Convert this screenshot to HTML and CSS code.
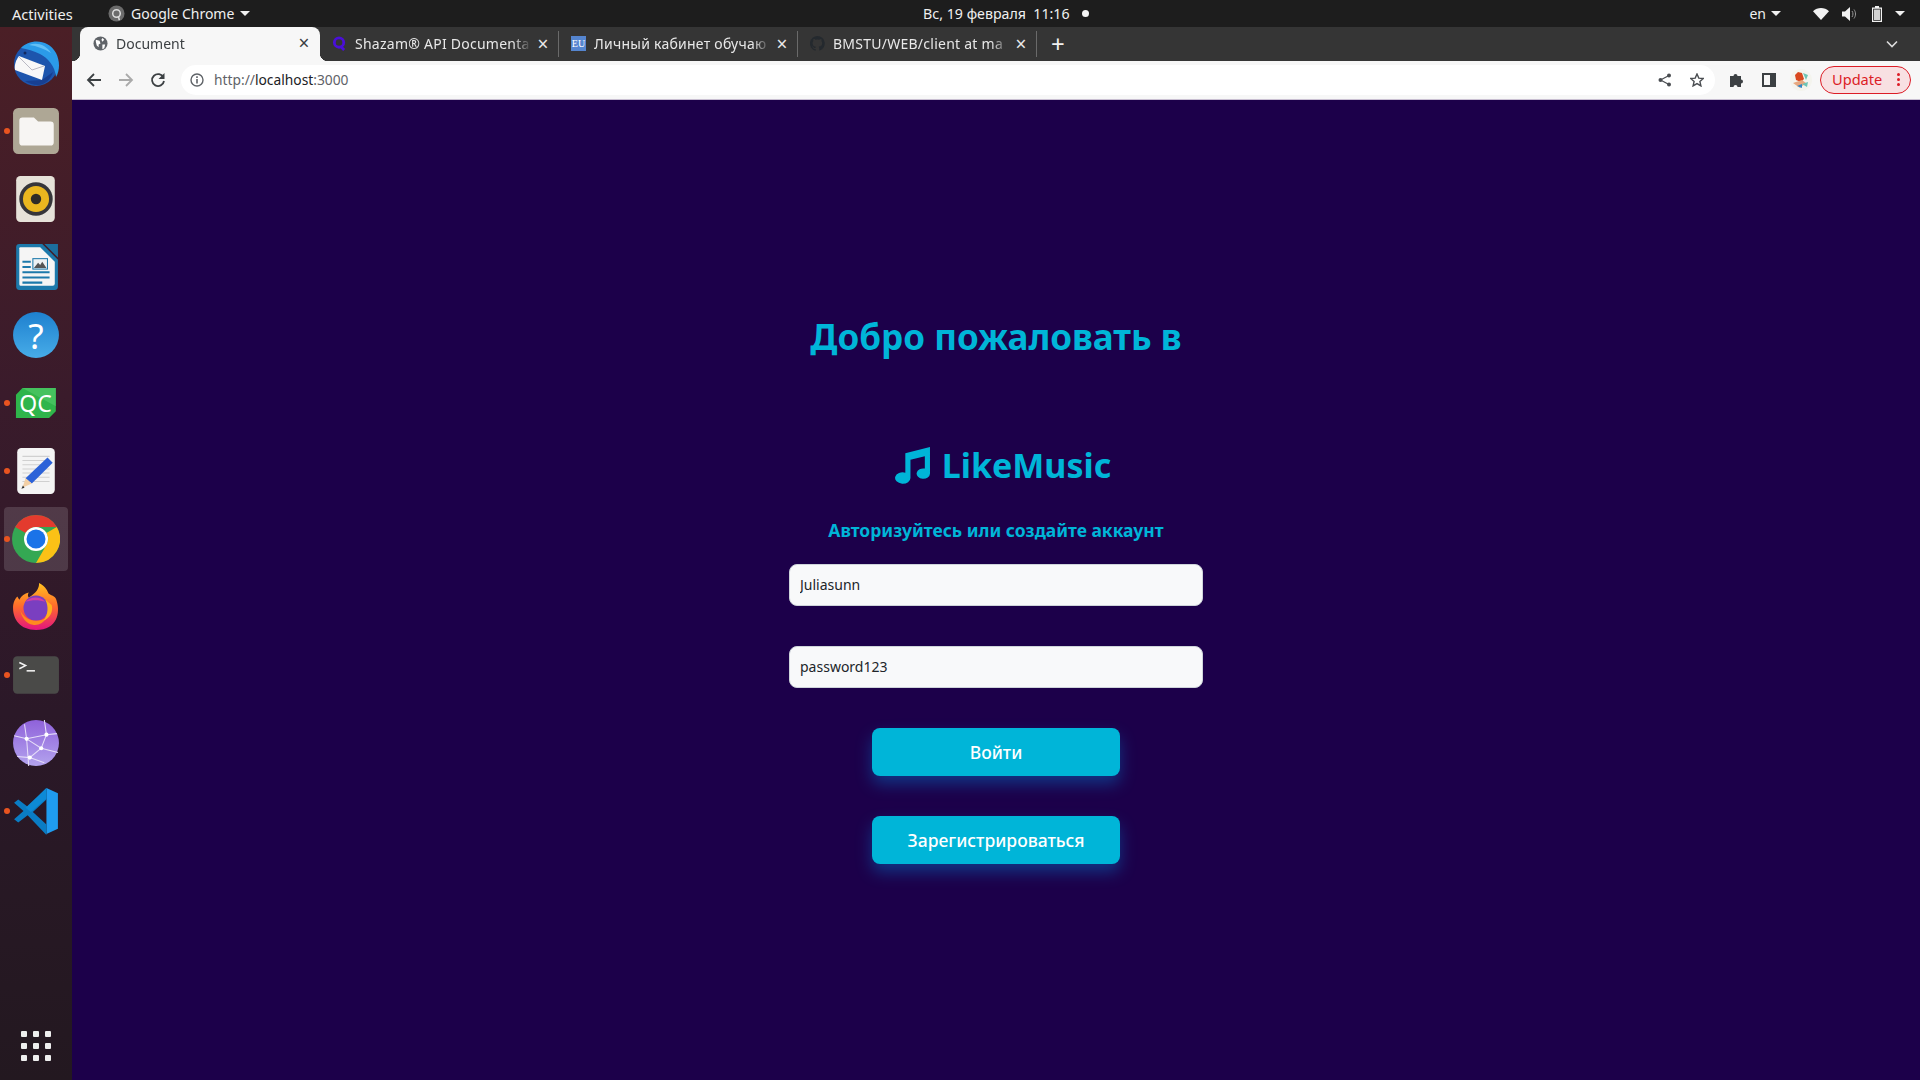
FILE: index.html
```html
<!DOCTYPE html>
<html lang="ru">
<head>
    <meta charset="UTF-8">
    <meta name="viewport" content="width=device-width, initial-scale=1.0">
    <title>Document</title>
    <link rel="stylesheet" href="styles.css">
</head>
<body>
    <!-- верхняя панель ubuntu -->
    <header class="topbar">
        <span class="activities">Activities</span>
        <span class="app-menu">
            <svg class="app-icon" viewBox="0 0 18 18"><circle cx="9" cy="9" r="8.5" fill="#6b6b6b"/><circle cx="9" cy="9" r="4" fill="none" stroke="#ddd" stroke-width="1.6"/><path d="M11 12l1 4" stroke="#ddd" stroke-width="1.6"/></svg>
            Google Chrome
            <i class="caret"></i>
        </span>
        <span class="clock">Вс, 19 февраля&nbsp; 11:16<i class="clock-dot"></i></span>
        <div class="tray">
            <span class="lang">en</span>
            <i class="caret lang-caret"></i>
            <svg class="tray-wifi" viewBox="0 0 16 12"><path d="M0 3.2C4.500-1 11.500-1 16 3.200L8 12z" fill="#f2f2f2"/></svg>
            <svg class="tray-sound" viewBox="0 0 15 14"><path d="M0 4.500h3L8 0v14l-5-4.500H0z" fill="#f2f2f2"/><path d="M10 4c1.300 1.800 1.300 4.200 0 6M12 2.500c2 2.700 2 6.300 0 9" fill="none" stroke="#999" stroke-width="1"/></svg>
            <svg class="tray-battery" viewBox="0 0 10 16"><path d="M3 0h4v1.500h3V16H0V1.500h3zM1.200 2.700v12.100h7.600V2.700z" fill="#f2f2f2" fill-rule="evenodd"/><rect x="2" y="3.500" width="6" height="10.500" fill="#f2f2f2" opacity=".85"/></svg>
            <i class="caret"></i>
        </div>
    </header>

    <div class="desktop">
        <nav class="dock">
            <div class="dock-item">
                <svg class="dock-icon" viewBox="0 0 48 48">
                    <circle cx="24" cy="25" r="22" fill="#1d55ad"/>
                    <path d="M9 9C17 0 36-1 44 14c4 8 4 17 0 24C43 27 36 19 28 15c-6-3-13-5-19-6z" fill="#2b9be8"/>
                    <path d="M17 6c8-3 17 0 22 8-6-4-14-7-22-8z" fill="#64c0f5"/>
                    <path d="M7 17l26 10-3 14L3 31c-1-5 1-10 4-14z" fill="#f8f8f8"/>
                    <path d="M7 18l13 13 12-4" fill="none" stroke="#b9b9c4" stroke-width="1"/>
                    <path d="M13 42l17-1 11-8c-2 7-8 13-15 13-5 0-10-2-13-4z" fill="#173f91"/>
                    <circle cx="13" cy="14" r="1.500" fill="#12285f"/>
                </svg>
            </div>
            <div class="dock-item running">
                <svg class="dock-icon" viewBox="0 0 46 46">
                    <rect x="1" y="1" width="44" height="44" rx="5" fill="#aea795"/>
                    <path d="M7 13q0-3 3-3h11l4 4h12q3 0 3 3v17q0 3-3 3H10q-3 0-3-3z" fill="#f7f5f3"/>
                </svg>
            </div>
            <div class="dock-item">
                <svg class="dock-icon" viewBox="0 0 46 46">
                    <rect x="4" y="1" width="37" height="44" rx="4" fill="#e6e2d9"/>
                    <circle cx="23" cy="23" r="16" fill="#36363a"/>
                    <circle cx="23" cy="23" r="12.500" fill="#eab71f"/>
                    <circle cx="23" cy="23" r="5" fill="#2e2c28"/>
                </svg>
            </div>
            <div class="dock-item">
                <svg class="dock-icon" viewBox="0 0 46 46">
                    <path d="M7 1h22l15 15v26q0 3-3 3H7q-3 0-3-3V4q0-3 3-3z" fill="#1c79ab"/>
                    <path d="M8 4h19l14 14v21q0 2-2 2H8q-1 0-1-2V5q0-1 1-1z" fill="#f5f5f5"/>
                    <path d="M31 1l13 0v13z" fill="#1c6f9e"/>
                    <path d="M10 17h8v2h-8zM10 22h8v2h-8zM10 27h26v2H10zM10 32h26v2H10zM10 37h19v2H10z" fill="#1c79ab"/>
                    <rect x="20" y="15" width="14" height="10" fill="#eef2f4" stroke="#1c79ab"/>
                    <path d="M21 24l4-5 2 2 2-3 4 6z" fill="#555"/>
                </svg>
            </div>
            <div class="dock-item">
                <svg class="dock-icon" viewBox="0 0 46 46">
                    <defs><linearGradient id="helpFill" x1="0" y1="0" x2="0" y2="1"><stop offset="0" stop-color="#1e80cf"/><stop offset="1" stop-color="#47ace8"/></linearGradient></defs>
                    <circle cx="23" cy="23" r="22" fill="url(#helpFill)"/>
                    <text x="23" y="36" class="help-mark">?</text>
                </svg>
            </div>
            <div class="dock-item running">
                <svg class="dock-icon" viewBox="0 0 46 46">
                    <path d="M10 8.600H42V31l-6.500 6.400H3.800V15z" fill="#2fb54b"/>
                    <path d="M10 8.600H42V26z" fill="#4fc867" opacity=".7"/>
                    <text x="22.500" y="31.500" class="qc-mark">QC</text>
                </svg>
            </div>
            <div class="dock-item running">
                <svg class="dock-icon" viewBox="0 0 46 46">
                    <rect x="5" y="1" width="36" height="44" rx="4" fill="#f4f4f4"/>
                    <path d="M10 9h26M10 13h26M10 17h26M10 21h26M10 25h26M10 29h26M10 33h26" stroke="#d0d0d0"/>
                    <path d="M34 10l5 5-20 20-6-5z" fill="#2c62d8"/>
                    <path d="M13 30l6 5-9 4z" fill="#f2cfa6"/>
                    <path d="M10.500 37l-1.500 3 3-1z" fill="#333"/>
                </svg>
            </div>
            <div class="dock-item running active">
                <svg class="dock-icon" viewBox="0 0 48 48">
                    <circle cx="24" cy="24" r="24" fill="#34a853"/>
                    <path d="M24 0a24 24 0 0 1 20.800 12H24a12 12 0 0 0-10.400 6L3.200 12A24 24 0 0 1 24 0z" fill="#e33b2e"/>
                    <path d="M44.800 12A24 24 0 0 1 24 48l10.400-18A12 12 0 0 0 34.400 18z" fill="#fbc116"/>
                    <circle cx="24" cy="24" r="12" fill="#fff"/>
                    <circle cx="24" cy="24" r="9.500" fill="#1a73e8"/>
                </svg>
            </div>
            <div class="dock-item">
                <svg class="dock-icon" viewBox="0 0 46 46">
                    <defs><linearGradient id="foxFill" x1="0" y1="0" x2="0" y2="1"><stop offset="0" stop-color="#ffc21f"/><stop offset=".5" stop-color="#ff6a2c"/><stop offset="1" stop-color="#e3147f"/></linearGradient></defs>
                    <path d="M26 0c7 4 8 8 9 10 4 3 7 2 8 8 3 10 1 27-20 27C8 45 1 35 1 24c0-5 2-9 4-11 1 1 1 2 2 3 2-4 5-6 9-7-1 2-1 3 0 5 4-3 10-6 10-14z" fill="url(#foxFill)"/>
                    <circle cx="23" cy="24" r="12" fill="#7a3fc0"/>
                    <path d="M13 18c4-5 14-6 19 0-6-2-13-2-19 0z" fill="#d13fa8"/>
                    <path d="M8 26c4 10 16 13 25 7-2 5-8 8-13 7-6-1-11-7-12-14z" fill="#ff8a1f"/>
                    <path d="M32 16c3 6 3 14-2 20 6-2 10-9 8-15z" fill="#ffb01f"/>
                </svg>
            </div>
            <div class="dock-item running">
                <svg class="dock-icon" viewBox="0 0 46 46">
                    <rect x="1" y="5" width="44" height="36" rx="4" fill="#4a4a48"/>
                    <path d="M7 11l6 3-6 3" fill="none" stroke="#f2f2f2" stroke-width="1.500"/>
                    <path d="M14 19h8" stroke="#f2f2f2" stroke-width="1.500"/>
                </svg>
            </div>
            <div class="dock-item">
                <svg class="dock-icon" viewBox="0 0 46 46">
                    <defs><linearGradient id="globeFill" x1="0" y1="0" x2="0" y2="1"><stop offset="0" stop-color="#8f62da"/><stop offset="1" stop-color="#b3a3ee"/></linearGradient></defs>
                    <circle cx="23" cy="23" r="22" fill="url(#globeFill)"/>
                    <path d="M2 16l12 3 19-4 10-1M14 19l2 26M14 19l14 9 16 4M33 15l-5 13-11 9 -12-1M33 15L31 1M14 19L12 5M17 37l14 5" fill="none" stroke="#e6def8" stroke-width="1"/>
                    <circle cx="14" cy="19" r="2" fill="#fff"/><circle cx="33" cy="15" r="2" fill="#fff"/><circle cx="28" cy="28" r="2" fill="#fff"/><circle cx="17" cy="37" r="2" fill="#fff"/>
                </svg>
            </div>
            <div class="dock-item running">
                <svg class="dock-icon" viewBox="0 0 46 46">
                    <path d="M33 1l11 5v34l-11 5z" fill="#1f9cf0"/>
                    <path d="M33 1L15 19 6 12l-4 3 9 8-9 8 4 3 9-7 18 19 0-10-13-12 13-12z" fill="#0a7cc4"/>
                    <path d="M33 1l-20 19 5 4 15-13z" fill="#0d8ad6"/>
                </svg>
            </div>
            <div class="dock-spacer"></div>
            <div class="app-grid">
                <i></i><i></i><i></i><i></i><i></i><i></i><i></i><i></i><i></i>
            </div>
        </nav>

        <div class="browser">
            <div class="tabstrip">
                <div class="tab tab-active">
                    <svg class="favicon" viewBox="0 0 16 16"><circle cx="8" cy="8" r="7.500" fill="#5f6368"/><path d="M3 4l4 1 1 3-2 1 0 3-2-2-1-4zM10 2l2 2-2 2-1-2zM10 9l3 0-1 4-2 1z" fill="#fff"/></svg>
                    <span class="tab-title">Document</span>
                    <span class="tab-close">×</span>
                </div>
                <div class="tab">
                    <svg class="favicon" viewBox="0 0 16 16"><circle cx="7.500" cy="7" r="5" fill="none" stroke="#4a0fd8" stroke-width="3"/><path d="M9 11l4 4" stroke="#4a0fd8" stroke-width="3"/></svg>
                    <span class="tab-title">Shazam® API Documenta</span>
                    <span class="tab-close">×</span>
                </div>
                <div class="tab">
                    <span class="favicon favicon-eu">EU</span>
                    <span class="tab-title">Личный кабинет обучаю</span>
                    <span class="tab-close">×</span>
                </div>
                <div class="tab">
                    <svg class="favicon" viewBox="0 0 16 16"><path d="M8 0a8 8 0 0 0-2.500 15.600c.4.100.5-.2.500-.4v-1.400c-2.200.5-2.700-1-2.700-1-.4-.9-.9-1.200-.9-1.200-.7-.5.100-.5.100-.5.800.1 1.200.8 1.200.8.700 1.200 1.900.9 2.300.7.100-.5.300-.9.500-1.100-1.800-.2-3.700-.9-3.700-4 0-.9.300-1.600.8-2.100-.1-.2-.4-1 .1-2.100 0 0 .7-.2 2.200.8a7.600 7.600 0 0 1 4 0c1.500-1 2.200-.8 2.200-.8.400 1.100.2 1.900.1 2.100.5.600.8 1.300.8 2.100 0 3.100-1.900 3.700-3.700 3.900.3.300.6.700.6 1.500v2.200c0 .2.100.5.600.4A8 8 0 0 0 8 0z" fill="#24292e"/></svg>
                    <span class="tab-title">BMSTU/WEB/client at ma</span>
                    <span class="tab-close">×</span>
                </div>
                <span class="tab-new">+</span>
                <div class="dock-spacer"></div>
                <svg class="tab-list" viewBox="0 0 12 8"><path d="M1 1.500l5 5 5-5" fill="none" stroke="#dcdcdc" stroke-width="1.600"/></svg>
            </div>

            <div class="toolbar">
                <svg class="tool-icon" viewBox="0 0 16 16"><path d="M15 8H2M8 2L2 8l6 6" fill="none" stroke="#3c4043" stroke-width="1.800"/></svg>
                <svg class="tool-icon" viewBox="0 0 16 16"><path d="M1 8h13M8 2l6 6-6 6" fill="none" stroke="#aaaaaa" stroke-width="1.800"/></svg>
                <svg class="tool-icon" viewBox="0 0 16 16"><path d="M13.500 5.500A6 6 0 1 0 14 9" fill="none" stroke="#3c4043" stroke-width="1.800"/><path d="M14.500 1v6h-6z" fill="#3c4043"/></svg>
                <div class="omnibox">
                    <svg class="info-icon" viewBox="0 0 14 14"><circle cx="7" cy="7" r="6" fill="none" stroke="#5f6368" stroke-width="1.400"/><path d="M6.200 6h1.600v4.500H6.200zM6.200 3.300h1.600v1.600H6.200z" fill="#5f6368"/></svg>
                    <span class="url">http://<b>localhost</b>:3000</span>
                    <div class="dock-spacer"></div>
                    <svg class="omni-icon" viewBox="0 0 14 14"><circle cx="2.500" cy="7" r="2" fill="#4a4d51"/><circle cx="11" cy="2.500" r="2" fill="#4a4d51"/><circle cx="11" cy="11.500" r="2" fill="#4a4d51"/><path d="M2.500 7L11 2.500M2.500 7L11 11.500" stroke="#4a4d51" stroke-width="1.300"/></svg>
                    <svg class="omni-icon" viewBox="0 0 14 14"><path d="M7 1l1.800 4.100 4.500.4-3.400 3 1 4.400L7 10.600l-3.900 2.300 1-4.400-3.400-3 4.500-.4z" fill="none" stroke="#4a4d51" stroke-width="1.400"/></svg>
                </div>
                <svg class="ext-icon" viewBox="0 0 16 16"><path d="M1 5h3.500a2 2 0 1 1 4 0H12v3.500a2 2 0 1 1 0 4V16H8.500a2 2 0 1 0-4 0H1z" fill="#3c4043" transform="translate(0 -1)"/></svg>
                <svg class="ext-icon panel-icon" viewBox="0 0 14 14"><path d="M0 0h14v14H0zM2 2v10h6V2z" fill="#3c4043" fill-rule="evenodd"/></svg>
                <svg class="avatar" viewBox="0 0 22 22">
                    <circle cx="11" cy="11" r="11" fill="#f4f4ee"/>
                    <path d="M8 3l4 1 2 6-3 3-5-2-1-5z" fill="#d9481f"/>
                    <path d="M3 14l9-3 4 3-6 5z" fill="#e8a87f"/>
                    <path d="M13 4l5 2-2 5zM12 15l6-2-1 5z" fill="#6fc4b4"/>
                    <path d="M7 17l5-2 0 4z" fill="#2f86c8"/>
                </svg>
                <div class="update-pill">
                    <span>Update</span>
                    <span class="update-dots"><i></i><i></i><i></i></span>
                </div>
            </div>

            <main class="page">
                <h1 class="welcome">Добро пожаловать в</h1>
                <div class="logo">
                    <svg class="logo-note" viewBox="0 0 37 37"><path d="M12 7L36 1v26a6.500 5 0 1 1-5-5V10L17 13.500V31a7.500 5.500 0 1 1-5-5z" fill="#00b5d8"/></svg>
                    <span>LikeMusic</span>
                </div>
                <h2 class="subtitle">Авторизуйтесь или создайте аккаунт</h2>
                <input class="field" type="text" value="Juliasunn">
                <input class="field" type="text" value="password123">
                <button class="action-btn">Войти</button>
                <button class="action-btn">Зарегистрироваться</button>
            </main>
        </div>
    </div>
</body>
</html>
```

FILE: styles.css
```css
* {
    box-sizing: border-box;
}
html, body {
    height: 100%;
}
body {
    margin: 0;
    overflow: hidden;
    display: flex;
    flex-direction: column;
    font-family: "Noto Sans", Roboto, sans-serif;
    background: #1c004a;
}

/* topbar */
.topbar {
    height: 27px;
    flex: none;
    display: flex;
    align-items: center;
    position: relative;
    background: #1d1d1d;
    color: #f0f0f0;
    font-size: 14px;
}
.activities {
    margin-left: 12px;
    width: 96px;
    font-size: 14.6px;
}
.app-menu {
    display: flex;
    align-items: center;
    gap: 6px;
}
.app-icon {
    width: 17px;
    height: 17px;
}
.caret {
    width: 0;
    height: 0;
    border-left: 5px solid transparent;
    border-right: 5px solid transparent;
    border-top: 5px solid #f0f0f0;
}
.clock {
    position: absolute;
    left: 923px;
    display: flex;
    align-items: center;
    white-space: pre;
    font-size: 14.2px;
}
.clock-dot {
    width: 7px;
    height: 7px;
    margin-left: 12px;
    border-radius: 50%;
    background: #f5f5f5;
}
.tray {
    margin-left: auto;
    display: flex;
    align-items: center;
    padding-right: 15px;
}
.lang {
    margin-right: 5px;
}
.lang-caret {
    margin-right: 32px;
}
.tray-wifi {
    width: 16px;
    height: 12px;
    margin-right: 13px;
}
.tray-sound {
    width: 15px;
    height: 14px;
    margin-right: 15px;
}
.tray-battery {
    width: 10px;
    height: 16px;
    margin-right: 13px;
}

.desktop {
    flex: 1;
    display: flex;
    min-height: 0;
}

/* dock */
.dock {
    width: 72px;
    flex: none;
    display: flex;
    flex-direction: column;
    padding-top: 2px;
    padding-bottom: 19px;
    background: linear-gradient(180deg, #4b1f26 0%, #3a1b2b 35%, #2b1828 65%, #231820 100%);
}
.dock-item {
    height: 68px;
    flex: none;
    position: relative;
    display: flex;
    align-items: center;
    justify-content: center;
}
.dock-icon {
    width: 48px;
    height: 48px;
}
.running::before {
    content: "";
    position: absolute;
    left: 4px;
    top: 31px;
    width: 6px;
    height: 6px;
    border-radius: 50%;
    background: #e95420;
    z-index: 2;
}
.active::after {
    content: "";
    position: absolute;
    left: 4px;
    top: 2px;
    width: 64px;
    height: 64px;
    border-radius: 4px;
    background: rgba(255, 255, 255, 0.14);
    z-index: 0;
}
.active .dock-icon {
    position: relative;
    z-index: 1;
}
.dock-spacer {
    flex: 1;
}
.help-mark {
    font-size: 34px;
    fill: #fff;
    text-anchor: middle;
}
.qc-mark {
    font-size: 22px;
    fill: #fff;
    text-anchor: middle;
}
.app-grid {
    display: grid;
    grid-template-columns: repeat(3, 6px);
    gap: 6px;
    justify-content: center;
}
.app-grid i {
    width: 6px;
    height: 6px;
    border-radius: 1px;
    background: #eeeeee;
}

/* chrome */
.browser {
    flex: 1;
    min-width: 0;
    display: flex;
    flex-direction: column;
}
.tabstrip {
    height: 34px;
    flex: none;
    display: flex;
    align-items: center;
    padding-left: 8px;
    padding-right: 22px;
    background: #353535;
}
.tab {
    width: 239px;
    height: 26px;
    flex: none;
    display: flex;
    align-items: center;
    padding-left: 12px;
    padding-right: 7px;
    padding-bottom: 1px;
    color: #e8e8e8;
    font-size: 14px;
    border-right: 1px solid #6a6a6a;
}
.tab-active {
    width: 240px;
    height: 34px;
    align-self: flex-end;
    position: relative;
    padding-left: 13px;
    padding-right: 8px;
    padding-bottom: 2px;
    color: #3c4043;
    background: #f7f7f7;
    border-right: none;
    border-radius: 8px 8px 0 0;
}
.tab-active::before,
.tab-active::after {
    content: "";
    position: absolute;
    bottom: 0;
    width: 8px;
    height: 8px;
}
.tab-active::before {
    left: -8px;
    background: radial-gradient(circle at 0 0, transparent 8px, #f7f7f7 8.5px);
}
.tab-active::after {
    right: -8px;
    background: radial-gradient(circle at 100% 0, transparent 8px, #f7f7f7 8.5px);
}
.favicon {
    width: 15px;
    height: 15px;
    flex: none;
}
.favicon-eu {
    display: flex;
    align-items: center;
    justify-content: center;
    background: #5585cf;
    color: #fff;
    font-size: 10px;
    font-family: "Liberation Serif", serif;
}
.tab-title {
    flex: 1;
    min-width: 0;
    margin-left: 8px;
    letter-spacing: 0.25px;
    white-space: nowrap;
    -webkit-mask-image: linear-gradient(90deg, #000 88%, transparent 98%);
    mask-image: linear-gradient(90deg, #000 88%, transparent 98%);
}
.tab-active .tab-title {
    letter-spacing: 0;
}
.tab-close {
    width: 16px;
    flex: none;
    font-size: 19px;
    line-height: 16px;
    text-align: center;
}
.tab-new {
    margin-left: 14px;
    color: #f0f0f0;
    font-size: 24px;
    line-height: 26px;
}
.tab-list {
    width: 12px;
    height: 8px;
}
.toolbar {
    height: 39px;
    flex: none;
    display: flex;
    align-items: center;
    padding-left: 14px;
    padding-bottom: 1px;
    background: #f7f7f7;
    border-bottom: 1px solid #c9bfd2;
}
.tool-icon {
    width: 16px;
    height: 16px;
    margin-right: 16px;
}
.omnibox {
    width: 1534px;
    height: 30px;
    margin-left: -1px;
    flex: none;
    display: flex;
    align-items: center;
    padding: 0 11px 0 9px;
    background: #fff;
    border-radius: 15px;
}
.info-icon {
    width: 14px;
    height: 14px;
}
.url {
    margin-left: 10px;
    color: #5f6368;
    font-size: 13.8px;
}
.url b {
    color: #202124;
    font-weight: 400;
}
.omni-icon {
    width: 14px;
    height: 14px;
    margin-left: 18px;
}
.ext-icon {
    width: 16px;
    height: 16px;
    margin-left: 14px;
}
.panel-icon {
    width: 14px;
    height: 14px;
    margin-left: 17px;
}
.avatar {
    width: 22px;
    height: 22px;
    margin-left: 14px;
}
.update-pill {
    width: 91px;
    height: 28px;
    margin-left: 8px;
    flex: none;
    display: flex;
    align-items: center;
    justify-content: space-between;
    padding: 0 10px 1px 11px;
    color: #dc1c26;
    font-size: 14.6px;
    background: #f8e0e2;
    border: 1px solid #dc1c26;
    border-radius: 14px;
}
.update-dots {
    display: flex;
    flex-direction: column;
    gap: 2px;
}
.update-dots i {
    width: 3px;
    height: 3px;
    border-radius: 50%;
    background: #dc1c26;
}

/* login page */
.page {
    flex: 1;
    display: flex;
    flex-direction: column;
    align-items: center;
    padding-top: 215px;
    background: #1c004a;
}
.welcome {
    margin: 0;
    color: #00b5d8;
    font-size: 35px;
    line-height: 44px;
    font-weight: 700;
}
.logo {
    height: 50px;
    margin-top: 81px;
    padding-left: 12px;
    display: flex;
    align-items: center;
    gap: 11px;
    color: #00b5d8;
    font-size: 34px;
    font-weight: 700;
}
.logo-note {
    width: 38px;
    height: 38px;
}
.subtitle {
    margin: 29px 0 0;
    color: #00b5d8;
    font-size: 17.5px;
    line-height: 22px;
    font-weight: 700;
}
.field {
    width: 414px;
    height: 42px;
    margin-top: 23px;
    padding: 0 10px 2px;
    display: block;
    color: #212529;
    font-family: inherit;
    font-size: 14px;
    background: #f8f9fa;
    border: 1px solid #ced4da;
    border-radius: 8px;
}
.field + .field {
    margin-top: 40px;
}
.action-btn {
    width: 248px;
    height: 48px;
    margin-top: 40px;
    color: #fff;
    font-family: inherit;
    font-size: 17.5px;
    font-weight: 500;
    background: #00b5d8;
    border: none;
    border-radius: 8px;
    box-shadow: 0 8px 16px rgba(0, 130, 220, 0.4);
}
```
